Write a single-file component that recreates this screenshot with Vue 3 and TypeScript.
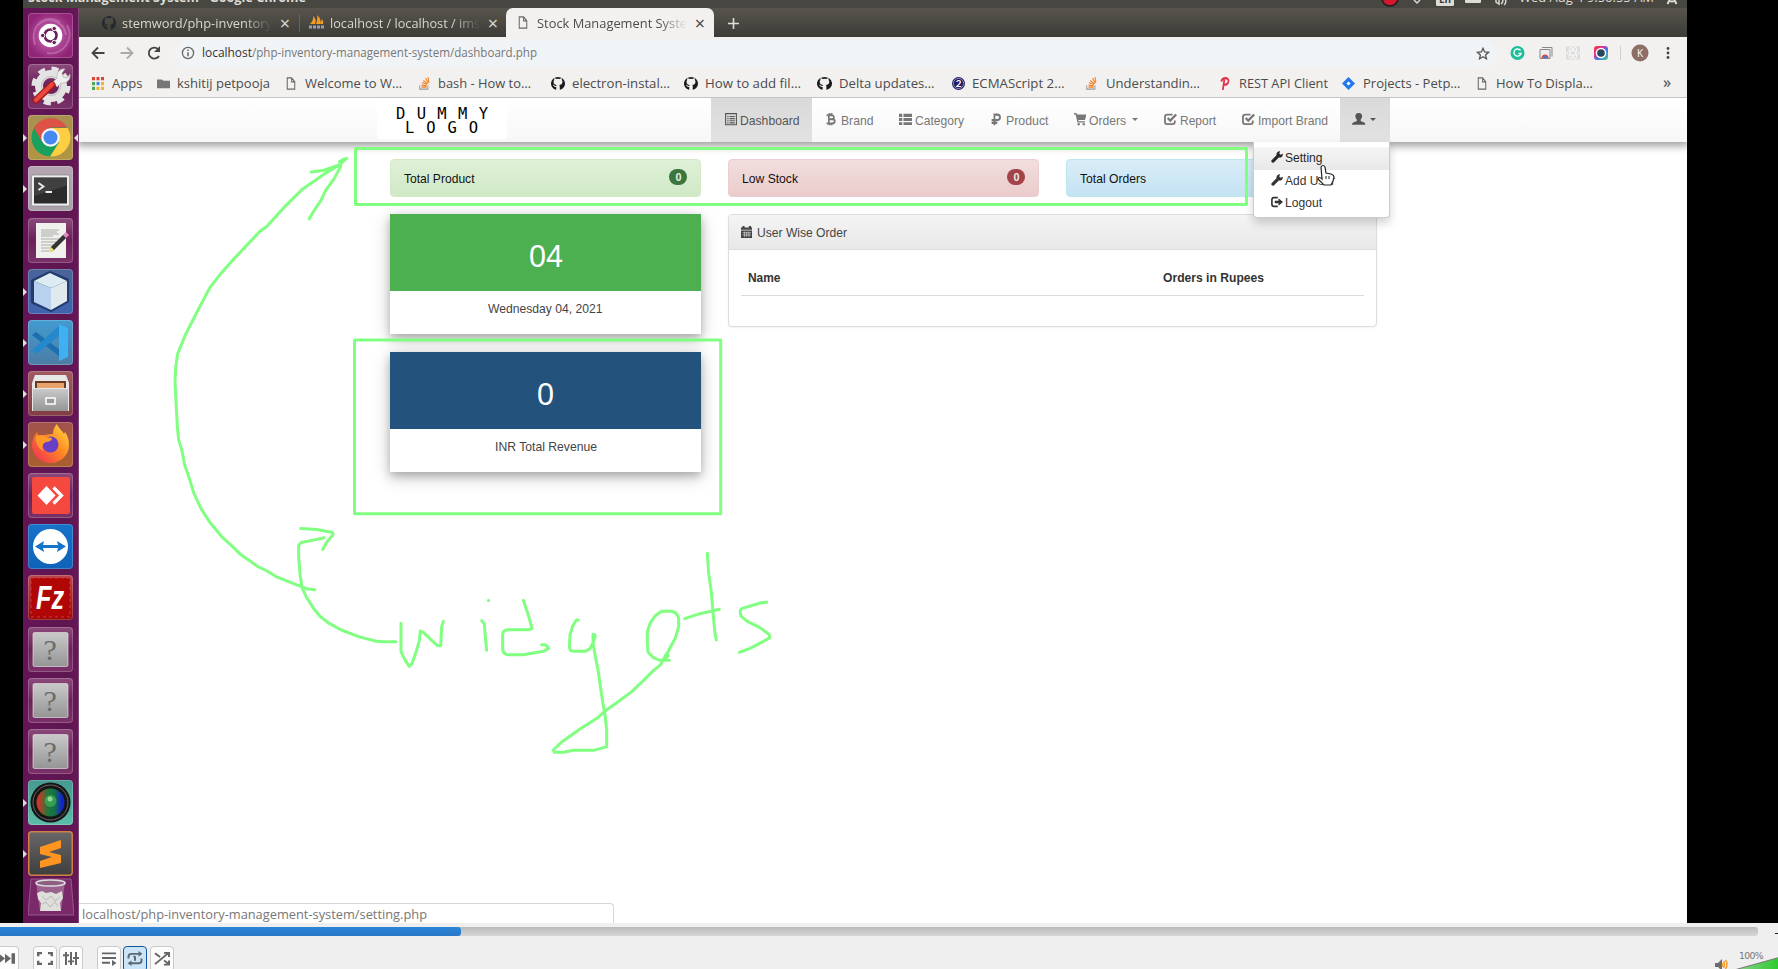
<script setup lang="ts">
import { h } from 'vue'

interface FitProps { t: string; w: number; s?: number; f?: string; b?: boolean; plain?: boolean }

// Single line of text stretched to a known width; its baseline sits 15px below the top.
const Fit = (p: FitProps) =>
  h('svg', { class: ['fit', p.f ?? 'ui'], width: p.w, height: 20 }, [
    h('text', {
      x: 0, y: 15, 'font-size': p.s ?? 12.6, 'font-weight': p.b ? 700 : 400,
      textLength: p.w, lengthAdjust: p.plain ? 'spacing' : 'spacingAndGlyphs', fill: 'currentColor',
    }, p.t),
  ])
Fit.props = { t: String, w: Number, s: Number, f: String, b: Boolean, plain: Boolean }

interface IconProps { n: string; w: number; h?: number }
const Icon = (p: IconProps) =>
  h('svg', { class: 'ic', width: p.w, height: p.h ?? p.w, viewBox: '0 0 16 16', preserveAspectRatio: 'none' }, [h('use', { href: '#i-' + p.n })])
Icon.props = { n: String, w: Number, h: Number }

const bookmarks = [
  { n: 'apps', iw: 12, slot: 20, w: 30.5, total: 65, t: 'Apps' },
  { n: 'folder', iw: 13, slot: 20, w: 93, total: 129, t: 'kshitij petpooja' },
  { n: 'file', iw: 10, slot: 19, w: 97, total: 133, t: 'Welcome to W…' },
  { n: 'so', iw: 11, slot: 19, w: 93, total: 132, t: 'bash - How to…' },
  { n: 'github', iw: 14, slot: 21, w: 98, total: 133, t: 'electron-instal…' },
  { n: 'github', iw: 14, slot: 21, w: 96, total: 133, t: 'How to add fil…' },
  { n: 'github', iw: 15, slot: 22, w: 95.5, total: 135, t: 'Delta updates…' },
  { n: 'ecma', iw: 13, slot: 20, w: 92.5, total: 134, t: 'ECMAScript 2…' },
  { n: 'so', iw: 11, slot: 20, w: 94, total: 134, t: 'Understandin…' },
  { n: 'p', iw: 10, slot: 19, w: 89, total: 122, t: 'REST API Client' },
  { n: 'jira', iw: 13, slot: 21, w: 97.5, total: 135, t: 'Projects - Petp…' },
  { n: 'file', iw: 10, slot: 19, w: 97, total: 116, t: 'How To Displa…' },
]

const nav = [
  { n: 'dash', iw: 12, slot: 14.5, w: 59.5, total: 100.5, t: 'Dashboard', active: true },
  { n: 'btc', iw: 10, slot: 15, w: 32.5, total: 73, t: 'Brand' },
  { n: 'list', iw: 13, slot: 16.5, w: 49, total: 92.5, t: 'Category' },
  { n: 'rub', iw: 10, slot: 14.5, w: 42.5, total: 82.5, t: 'Product' },
  { n: 'cart', iw: 12.5, slot: 15.5, w: 37, total: 90, t: 'Orders', caret: true },
  { n: 'check', iw: 13, slot: 16.5, w: 36, total: 78, t: 'Report' },
  { n: 'check', iw: 13, slot: 16.5, w: 70, total: 112.5, t: 'Import Brand' },
]

const launcher = [
  { n: 'ubuntu', bg: 'violet' }, { n: 'settings', bg: 'glass' },
  { n: 'chrome', bg: 'gold', run: true, focus: true }, { n: 'term', bg: 'silver', run: true },
  { n: 'edit', bg: 'glass' }, { n: 'cube', bg: 'royal', run: true },
  { n: 'code', bg: 'azure', run: true }, { n: 'files', bg: 'brown', run: true },
  { n: 'fox', bg: 'rust', run: true }, { n: 'anydesk', bg: 'glass' },
  { n: 'tv', bg: 'blue' }, { n: 'fz', bg: 'red' },
  { n: 'unknown', bg: 'glass' }, { n: 'unknown', bg: 'glass' }, { n: 'unknown', bg: 'glass' },
  { n: 'lens', bg: 'teal', run: true }, { n: 'sublime', bg: 'dark', run: true },
]

const stats = [
  { t: 'Total Product', w: 70.5, c: 'success' },
  { t: 'Low Stock', w: 56, c: 'danger' },
  { t: 'Total Orders', w: 66, c: 'info' },
]
const cards = [
  { v: '04', vw: 34, t: 'Wednesday 04, 2021', w: 114.5, c: 'green' },
  { v: '0', vw: 17, t: 'INR Total Revenue', w: 102, c: 'navy' },
]
const menu = [
  { n: 'wrench', t: 'Setting', w: 37.5, hover: true },
  { n: 'wrench', t: 'Add User', w: 50 },
  { n: 'logout', t: 'Logout', w: 37 },
]
const controls = ['next', 'full', 'ext', 'playlist', 'loop', 'random']
</script>

<template>
  <div class="shot">
    <svg class="defs" width="0" height="0">
      <defs>
        <linearGradient id="g-fox" x1="1" y1="0" x2="0" y2="1"><stop offset="0" stop-color="#ffe04a" /><stop offset=".45" stop-color="#ff8a20" /><stop offset="1" stop-color="#f0245c" /></linearGradient>
        <linearGradient id="g-grey" x1="0" y1="0" x2="0" y2="1"><stop offset="0" stop-color="#c9c9c9" /><stop offset="1" stop-color="#959595" /></linearGradient>
        <linearGradient id="g-lens"><stop offset=".1" stop-color="#c33a28" /><stop offset=".4" stop-color="#1c7a3a" /><stop offset=".65" stop-color="#157049" /><stop offset=".9" stop-color="#1226c8" /></linearGradient>
        <linearGradient id="g-rgb" x1="0" y1="0" x2="1" y2="1"><stop offset="0" stop-color="#f33" /><stop offset=".35" stop-color="#e0309a" /><stop offset=".6" stop-color="#3a7cf0" /><stop offset="1" stop-color="#4ad07a" /></linearGradient>
        <linearGradient id="g-vol"><stop offset="0" stop-color="#8fd08f" /><stop offset="1" stop-color="#2ccb2c" /></linearGradient>
      </defs>
      <symbol id="i-github" viewBox="0 0 16 16"><path fill="currentColor" d="M8 0a8 8 0 0 0-2.5 15.6c.4.1.5-.2.5-.4v-3c-2.2.5-2.7-1-2.7-1-.4-.9-.9-1.2-.9-1.2-.7-.5.1-.5.1-.5.8.1 1.2.8 1.2.8.7 1.2 1.9.9 2.3.7.1-.5.3-.9.5-1.1-1.8-.2-3.6-.9-3.6-4 0-.9.3-1.6.8-2.1-.1-.2-.4-1 .1-2.1 0 0 .7-.2 2.2.8a7.6 7.6 0 0 1 4 0c1.5-1 2.2-.8 2.2-.8.4 1.1.2 1.9.1 2.1.5.6.8 1.3.8 2.1 0 3.1-1.9 3.8-3.7 4 .3.3.6.8.6 1.5v3.800c0 .2.1.5.5.4A8 8 0 0 0 8 0z" /></symbol>
      <symbol id="i-file" viewBox="0 0 16 16"><path fill="none" stroke="#666" stroke-width="1.6" d="M2 1h7l5 5v9H2zM9 1v5h5" /></symbol>
      <symbol id="i-folder" viewBox="0 0 16 16"><path fill="#777" d="M0 2h6l2 2h8v11H0z" /></symbol>
      <symbol id="i-apps" viewBox="0 0 16 16"><path fill="#dc4437" d="M0 0h4v4H0zM6 0h4v4H6zM12 0h4v4h-4z" /><path fill="#4caa57" d="M0 6h4v4H0zM0 12h4v4H0z" /><path fill="#3f83ee" d="M6 6h4v4H6z" /><path fill="#f2b526" d="M12 6h4v4h-4zM6 12h4v4H6zM12 12h4v4h-4z" /></symbol>
      <symbol id="i-so" viewBox="0 0 16 16"><path fill="none" stroke="#999" stroke-width="1.4" d="M1 10v5h12v-5" /><path fill="none" stroke="#f48024" stroke-width="1.5" d="M3.5 12.500h7.5M3.6 10l7.5.8M4.5 7l7.2 2.2M6.3 4.2l6.2 4M9.5 1.500l4.2 6M13 0l1.500 6.5" /></symbol>
      <symbol id="i-ecma" viewBox="0 0 16 16"><circle cx="8" cy="8" r="8" fill="#211c63" /><circle cx="8" cy="8" r="6.3" fill="none" stroke="#fff" stroke-width=".6" /><text x="4.5" y="12.5" font-size="12" font-weight="700" fill="#fff" font-family="Lato,sans-serif">2</text></symbol>
      <symbol id="i-p" viewBox="0 0 16 16"><path fill="none" stroke="#e8304c" stroke-width="2.8" d="M4.5 16L7 3M2 5.500C4 .5 14 0 13.500 5S8 9.500 6 9" /></symbol>
      <symbol id="i-jira" viewBox="0 0 16 16"><path fill="#2278ec" d="M8 0l8 8-8 8-8-8z" /><path fill="#fff" d="M8 5.400L10.600 8 8 10.600 5.400 8z" /></symbol>
      <symbol id="i-dash" viewBox="0 0 16 16"><path fill="none" stroke="currentColor" stroke-width="1.5" d="M.8.8h14.4v14.4H.8z" /><path stroke="currentColor" stroke-width="1.5" d="M3 4.500h1.800M6 4.500h7M3 7.200h1.800M6 7.200h7M3 9.900h1.800M6 9.900h7M3 12.600h1.800M6 12.600h7" /></symbol>
      <symbol id="i-btc" viewBox="0 0 16 16"><path fill="none" stroke="currentColor" stroke-width="2.6" d="M1 3h8c5 0 5 5 0 5H5h5c5.500 0 5.500 5.400 0 5.400H1M4.500 3v10M5.500 0v3M9 0v3M5.500 13v3M9 13v3" /></symbol>
      <symbol id="i-list" viewBox="0 0 16 16"><path fill="currentColor" d="M0 1h4v4H0zM5.500 1H16v4H5.500zM0 6.500h4v3.800H0zM5.500 6.500H16v3.800H5.500zM0 11.800h4v3.600H0zM5.500 11.800H16v3.600H5.500z" /></symbol>
      <symbol id="i-rub" viewBox="0 0 16 16"><path fill="none" stroke="currentColor" stroke-width="2.8" d="M5.500 16V2H10c6 0 6 7 0 7H1M1 12.600h9" /></symbol>
      <symbol id="i-cart" viewBox="0 0 16 16"><path fill="currentColor" d="M0 0h3l1 2h12l-2 7H5.500l.5 1.500h8V12H4.500L2 2H0zM4.500 13h3v3h-3zM11 13h3v3h-3z" /></symbol>
      <symbol id="i-check" viewBox="0 0 16 16"><path fill="none" stroke="currentColor" stroke-width="2.2" d="M10.500 2.200H4C2 2.200 1.200 3 1.200 5v6.500c0 2 .8 2.800 2.800 2.800h6.500c2 0 2.800-.8 2.800-2.800V9.500" /><path fill="none" stroke="currentColor" stroke-width="2.8" d="M4.500 6.500l3.200 3.200L15 2" /></symbol>
      <symbol id="i-user" viewBox="0 0 16 16"><path fill="currentColor" d="M8 0c3 0 4.200 2 4 4.500-.1 2-1 3-1.700 4 0 1.500 0 2 1 2.300 3.200 1 4.700 1.800 4.700 4.200H0c0-2.400 1.500-3.200 4.700-4.200 1-.3 1-.8 1-2.300-.7-1-1.600-2-1.700-4C3.800 2 5 0 8 0z" /></symbol>
      <symbol id="i-wrench" viewBox="0 0 16 16"><path fill="currentColor" d="M15.700 3.600L12.800 5 11 3.200l1.200-3C9 0 7 2 7.300 5.600L.8 12.200c-1.500 1.800 1.200 4.400 3 3l6.600-6.500c3.400.5 5.600-1.700 5.300-5.100z" /></symbol>
      <symbol id="i-logout" viewBox="0 0 16 16"><path fill="none" stroke="currentColor" stroke-width="2.2" d="M9 2.200H4C2 2.200 1.200 3 1.200 5v6c0 2 .8 2.800 2.800 2.800h5" /><path fill="currentColor" d="M5 6.200h5V3l6 5-6 5V9.800H5z" /></symbol>
      <symbol id="i-calendar" viewBox="0 0 16 16"><path fill="currentColor" d="M0 2h2V0h3v2h6V0h3v2h2v3H0zM0 6h16v10H0z" /><path stroke="#eee" stroke-width=".8" d="M2 9h12M2 12h12M5 7.500v7M8 7.500v7M11 7.500v7" /></symbol>

      <symbol id="i-ubuntu" viewBox="0 0 45 45"><path fill="none" stroke="#d9a0cf" stroke-width="2" opacity=".4" d="M7 32C1 12 18 0 32 9M39 12c8 14-4 31-20 28M10 12C20 2 36 8 38 22" /><circle cx="22.5" cy="22.5" r="11.8" fill="#fff" /><circle cx="22.5" cy="22.5" r="6" fill="none" stroke="#6d1f5d" stroke-width="2.6" /><g fill="#6d1f5d" stroke="#fff"><circle cx="14.7" cy="22.5" r="2.2" /><circle cx="26.2" cy="15.5" r="2.2" /><circle cx="26.2" cy="29.5" r="2.2" /></g></symbol>
      <symbol id="i-settings" viewBox="0 0 45 45"><circle cx="23" cy="22" r="17" fill="none" stroke="#e3e3e3" stroke-width="5" stroke-dasharray="7 6.35" /><circle cx="23" cy="22" r="12" fill="none" stroke="#e3e3e3" stroke-width="8" /><circle cx="23" cy="22" r="9.5" fill="none" stroke="#bdbdbd" stroke-width="1" /><path fill="#eee" stroke="#aaa" stroke-width=".6" d="M25 18l4-4c-1-5 3-10 8-9l-3 4 1 4 4 1 3-4c1 6-4 10-9 9l-4 4z" /><path stroke="#a61818" stroke-width="7" stroke-linecap="round" d="M8 36L24 21" /><path stroke="#e8483c" stroke-width="4.5" stroke-linecap="round" d="M8 36L24 20.5" /></symbol>
      <symbol id="i-chrome" viewBox="0 0 45 45"><circle cx="22.5" cy="22.5" r="19" fill="#18a05e" /><path fill="#de5246" d="M22.500 22.500L14 27 6 13a19 19 0 0 1 33-.5H22.500z" /><path fill="#ffcd42" d="M22.500 13h17.200A19 19 0 0 1 22 41.500l9-14z" /><circle cx="22.5" cy="22.5" r="9.3" fill="#f4f4f4" /><circle cx="22.5" cy="22.5" r="7" fill="#4687f0" /></symbol>
      <symbol id="i-term" viewBox="0 0 45 45"><rect x="3.5" y="9" width="38" height="31" rx="1.5" fill="#eee" stroke="#888" stroke-width=".7" /><rect x="6" y="11.5" width="33" height="26" fill="#2b2b2b" /><path fill="#555" opacity=".5" d="M6 11.500h33v8L6 30z" /><path fill="none" stroke="#eee" stroke-width="1.8" d="M10.500 17l5 3.500-5 3.500M17.500 26H24" /></symbol>
      <symbol id="i-edit" viewBox="0 0 45 45"><path fill="#f0f0ec" d="M8 5h30v35H8z" /><path stroke="#999" stroke-width=".8" d="M13 12h18M13 14h16M13 16h18M13 18h12M13 21h18M13 24h15M13 27h17M13 30h10M13 33h12" /><path stroke="#333" stroke-width="4.5" d="M24 31l13-13" /><path stroke="#d98fc0" stroke-width="4.5" d="M36.500 18.500l3-3" /><path fill="#e9dd7a" d="M21 34l1.500-5.500 4 4z" /></symbol>
      <symbol id="i-cube" viewBox="0 0 45 45"><path fill="#1b315e" stroke="#1b315e" stroke-width="4" stroke-linejoin="round" opacity=".8" d="M22 4l17 7v21L23 41 5 33V12z" /><path fill="#dcecf2" d="M22 4l17 8-16 7L6 12z" /><path fill="#b7d1ee" d="M6 12l17 7v22L6 33z" /><path fill="#dfe9ee" d="M39 12l-16 7v22l16-9z" /></symbol>
      <symbol id="i-code" viewBox="0 0 45 45"><path fill="#1c6fae" d="M4 15l4-3 24 18v7z" /><path fill="#2488cd" d="M4 30l4 4 24-19V5z" /><path fill="#3eb0f3" d="M31 4l9 4v29l-9 4z" /></symbol>
      <symbol id="i-files" viewBox="0 0 45 45"><path fill="#e7e7e7" d="M7 4h31l3 8v28H4V12z" /><path fill="#6b3a24" d="M7 10h31v7H7z" /><path fill="#e8a36c" d="M9 12h27v5H9z" /><path fill="url(#g-grey)" d="M5 18h35v22H5z" /><rect x="18" y="27" width="9" height="6" fill="#999" stroke="#fff" stroke-width="1.5" /></symbol>
      <symbol id="i-fox" viewBox="0 0 45 45"><path fill="url(#g-fox)" d="M25 12c0-5 2-8 4-10 2 5 5 6 7 10l1-2c3 4 4 9 4 13 0 10-8 18-18.500 18S4 33 4 23c0-5 2-9 5-13l1 3c4 0 8 0 15-1z" /><circle cx="22.5" cy="22.5" r="8" fill="#6740c7" /><path fill="#ff9a2a" d="M8 14c5-2 8 0 10 1l6 1c0 3-4 4-6 4-4 2-5 5-2 9-6-2-9-9-8-15z" /></symbol>
      <symbol id="i-anydesk" viewBox="0 0 45 45"><rect x="4" y="4" width="38" height="37" rx="2" fill="#f5483f" /><path fill="#fff" d="M18.500 13l9 9.500-9 9.500-9-9.500z" /><path fill="none" stroke="#fff" stroke-width="3.2" d="M25.500 14.500l8 8-8 8" /></symbol>
      <symbol id="i-tv" viewBox="0 0 45 45"><circle cx="22.5" cy="22.5" r="17.5" fill="#fff" /><path fill="#1573c8" d="M7 22.500l9-5.500-1 4h15l-1-4 9 5.500-9 5.500 1-4H15l1 4z" /></symbol>
      <symbol id="i-fz" viewBox="0 0 45 45"><rect x="3" y="3" width="39" height="39" fill="#b10606" stroke="#d33" stroke-dasharray="3 3" /><text x="8" y="34" font-size="34" font-weight="700" font-style="italic" font-family="Liberation Sans,Arial,sans-serif" fill="#fff" textLength="28" lengthAdjust="spacingAndGlyphs">Fz</text></symbol>
      <symbol id="i-unknown" viewBox="0 0 45 45"><rect x="5" y="5.5" width="35" height="34" rx="1.5" fill="url(#g-grey)" stroke="#ddd" stroke-width=".7" /><text x="15.5" y="33" font-size="30" font-family="Liberation Serif,serif" fill="#6c6c6c">?</text></symbol>
      <symbol id="i-lens" viewBox="0 0 45 45"><circle cx="22.5" cy="22.5" r="20" fill="#151515" /><circle cx="22.5" cy="22.5" r="17.5" fill="none" stroke="#666" /><circle cx="22.5" cy="22.5" r="14" fill="url(#g-lens)" /><circle cx="22.5" cy="21" r="6" fill="#4abb5a" opacity=".6" /><circle cx="22" cy="19" r="2.5" fill="#b8f0b0" opacity=".7" /></symbol>
      <symbol id="i-sublime" viewBox="0 0 45 45"><path fill="#ff9420" d="M12 16l21-7v8l-12 4 12 3v8l-21 5v-7l12-4-12-3z" /></symbol>

      <symbol id="i-next" viewBox="0 0 16 16"><path fill="#666" d="M0 3l6 5-6 5zM6 3l6 5-6 5zM12.500 2.500H16v11h-3.500z" /></symbol>
      <symbol id="i-full" viewBox="0 0 16 16"><path fill="none" stroke="#666" stroke-width="2.4" d="M1.200 5.500V2.200H5M11 2.200h3.800v3.300M14.800 10.500v3.300H11M5 13.800H1.200v-3.300" /></symbol>
      <symbol id="i-ext" viewBox="0 0 16 16"><path fill="none" stroke="#666" stroke-width="2" d="M3 1v14M8 1v14M13 1v14M0 4.500h6M5 11h6M10 7.500h6" /></symbol>
      <symbol id="i-playlist" viewBox="0 0 16 16"><path stroke="#666" stroke-width="2" d="M1 2.500h14M1 7.500h14M1 12.500h8" /><path fill="#666" d="M11 9.500l4.500 3.200L11 16z" /></symbol>
      <symbol id="i-loop" viewBox="0 0 16 16"><path fill="none" stroke="#5c6a76" stroke-width="2" d="M1.500 8V6c0-2 1-3 3-3H13M14.500 8v2c0 2-1 3-3 3H3M8 5.500v5M6.500 6.500L8 5.500" /><path fill="#5c6a76" d="M11.500 0l4 3-4 3zM4.500 10l-4 3 4 3z" /></symbol>
      <symbol id="i-random" viewBox="0 0 16 16"><path fill="none" stroke="#666" stroke-width="2" d="M1 2.500l5 4M1 14L14 2.500M10 10l4.500 3.500M10 2h5v4.500M10 14.500h5V10" /></symbol>
    </svg>

    <div class="desktop">
      <header class="menubar">
        <Fit class="title" t="Stock Management System - Google Chrome" :w="278" :s="12.6" f="ub" b />
        <svg class="tray" width="135" height="8"><circle cx="9" cy="-2" r="8" fill="#d4172d" stroke="#1c1c1c" stroke-width="1.5" /><path fill="none" stroke="#d9d7cf" stroke-width="1.5" d="M33 0l3 3 3-3M115 0v2l3 2V0M121-2q2 4-1 6M124-2q2 5-1 7" /><rect x="55" y="-6" width="18" height="12" rx="1.5" fill="#dfdcd5" /><text x="58" y="3" font-size="10" font-weight="700" font-family="Open Sans,sans-serif" fill="#3c3b37">En</text><rect x="84" y="-4" width="16" height="7" rx="1" fill="#dfdcd5" /></svg>
        <Fit class="clock" t="Wed Aug  4 9:56:55 AM" :w="135" :s="12.6" f="ub" />
        <svg class="gear" width="14" height="8"><circle cx="7" cy="-2" r="3.5" fill="none" stroke="#dfdcd5" stroke-width="2" /><path stroke="#dfdcd5" stroke-width="2" d="M4 1L2.500 4M10 1l1.500 3" /></svg>
      </header>
      <div class="body">
        <aside class="launcher">
          <div v-for="(l, i) in launcher" :key="i" class="tile" :class="l.bg">
            <svg width="45" height="45"><use :href="'#i-' + l.n" /></svg>
            <i v-if="l.run" class="run" />
            <i v-if="l.focus" class="focus" />
          </div>
          <svg class="trash" width="46" height="38"><path fill="#7a2a68" stroke="#98588a" d="M3 1h40l3 36H0z" /><path fill="#a87a9d" opacity=".7" d="M8 4h29l-4 29H12z" /><ellipse cx="22.5" cy="5" rx="14.5" ry="3" fill="#8e5f83" stroke="#ddd" stroke-width="1.5" /><path fill="#dededa" d="M9 15l5-2 4 2 5-1 5 2 6-3 1 7-3 5 1 8H12l1-8-3-4z" /><path fill="none" stroke="#b8b8b4" d="M14 18l4 4 5-4 4 5 5-4M14 26l4-2 4 5 5-5 3 4" /></svg>
        </aside>

        <main class="browser">
          <div class="tabs">
            <div class="tab t1"><Icon class="ink" n="github" :w="14" :h="14" /><span class="lbl"><Fit t="stemword/php-inventory" :w="150" f="ub" :s="12.5" /></span><b>×</b></div>
            <div class="tab t2"><svg class="ic" width="15" height="15"><path fill="#f39a20" d="M1 9Q5 5 4 1q4 3 2 8zM7 9q2-6 1-9 5 4 3 9zM11 9l2-5q2 3 1 5z" /><path stroke="#9a9db5" stroke-width="3" stroke-dasharray="3 1" d="M0 12h15" /></svg><span class="lbl"><Fit t="localhost / localhost / ims" :w="150" f="ub" :s="12.5" /></span><b>×</b></div>
            <div class="tab t3"><Icon n="file" :w="10" :h="13" /><span class="lbl"><Fit t="Stock Management Syste" :w="150" f="ub" :s="12.5" /></span><b>×</b></div>
            <svg class="plus" width="11" height="11"><path stroke="#deddd6" stroke-width="1.6" d="M5.500 0v11M0 5.500h11" /></svg>
          </div>
          <div class="toolbar">
            <svg class="arrows" width="84" height="20"><g fill="none" stroke-width="1.8"><path stroke="#444" d="M25.500 10H14M19 4.500L13.500 10l5.500 5.500" /><path stroke="#aaa" d="M41.500 10H53M48 4.500l5.500 5.500-5.500 5.500" /><path stroke="#444" d="M80 13A5.500 5.500 0 1 1 79 6" /></g><path fill="#444" d="M81 3v6h-6z" /></svg>
            <div class="omni">
              <svg width="14" height="14"><circle cx="7" cy="7" r="5.6" fill="none" stroke="#666" stroke-width="1.3" /><path stroke="#666" stroke-width="1.5" d="M7 6.300v4M7 3.500v1.500" /></svg>
              <Fit class="host" t="localhost" :w="50" f="ub" :s="12.5" /><Fit class="path" t="/php-inventory-management-system/dashboard.php" :w="285" f="ub" :s="12.5" />
              <svg class="star" width="14" height="13"><path fill="none" stroke="#555" stroke-width="1.3" d="M7 1.300l1.600 3.700 4 .3-3 2.600.9 3.900L7 9.700l-3.500 2.100.9-3.900-3-2.600 4-.3z" /></svg>
            </div>
            <svg class="exts" width="176" height="20"><circle cx="7.5" cy="10" r="7" fill="#1cbf98" /><path fill="none" stroke="#fff" stroke-width="1.4" d="M10.500 7.500A3.600 3.600 0 1 0 11 10.500H8.500" /><path fill="#eee" stroke="#888" d="M32 4.500h10v9M30 6.500h10v9H30z" /><path fill="#d94b3c" d="M31.500 15a3.500 3.500 0 0 1 7 0z" /><circle cx="35.5" cy="14" r="1.5" fill="#3b78e7" /><rect x="56" y="3.5" width="14" height="13" fill="#dcdcdc" /><g fill="none" stroke="#f7f7f7"><ellipse cx="63" cy="10" rx="6" ry="2.3" /><ellipse cx="63" cy="10" rx="6" ry="2.3" transform="rotate(60 63 10)" /><ellipse cx="63" cy="10" rx="6" ry="2.3" transform="rotate(120 63 10)" /></g><rect x="84" y="3" width="14" height="14" rx="3" fill="url(#g-rgb)" /><circle cx="91" cy="10" r="5.3" fill="#fff" /><circle cx="91" cy="10" r="3.8" fill="#27455b" /><path stroke="#d0d0d0" d="M110.500 3v14" /><circle cx="130" cy="10" r="8.5" fill="#8d6e66" /><text x="127" y="13.5" font-size="10" font-family="Open Sans,sans-serif" fill="#fff">K</text><g fill="#444"><circle cx="158" cy="5.5" r="1.4" /><circle cx="158" cy="10" r="1.4" /><circle cx="158" cy="14.5" r="1.4" /></g></svg>
          </div>
          <div class="bookmarks">
            <div v-for="(b, i) in bookmarks" :key="i" class="bm" :style="{ width: b.total + 'px' }">
              <span class="slot" :style="{ width: b.slot + 'px' }"><Icon :n="b.n" :w="b.iw" :h="b.n === 'folder' ? 11 : 13" /></span>
              <Fit :t="b.t" :w="b.w" f="ub" :s="12.4" />
            </div>
            <span class="more">»</span>
          </div>

          <div class="page">
            <nav class="navbar">
              <div class="logo"><Fit t="DUMMY" :w="92" :s="15.5" f="pix" plain /><Fit t="LOGO" :w="73" :s="15.5" f="pix" plain /></div>
              <div v-for="n in nav" :key="n.t" class="item" :class="{ active: n.active }" :style="{ width: n.total + 'px' }">
                <span class="slot" :style="{ width: n.slot + 'px' }"><Icon :n="n.n" :w="n.iw" :h="12.5" /></span>
                <Fit :t="n.t" :w="n.w" /><i v-if="n.caret" class="caret" />
              </div>
              <div class="item active user">
                <Icon n="user" :w="13.5" :h="12.5" /><i class="caret" />
                <div class="menu">
                  <div v-for="m in menu" :key="m.t" class="row" :class="{ hover: m.hover }"><span class="slot"><Icon :n="m.n" :w="12" :h="12" /></span><Fit :t="m.t" :w="m.w" /></div>
                </div>
              </div>
            </nav>

            <div class="content">
              <section class="stats">
                <div v-for="s in stats" :key="s.t" class="stat" :class="s.c"><Fit :t="s.t" :w="s.w" /><span class="badge">0</span></div>
              </section>
              <section class="cols">
                <div class="left">
                  <article v-for="c in cards" :key="c.t" class="card">
                    <div class="head" :class="c.c"><Fit :t="c.v" :w="c.vw" :s="31.5" /></div>
                    <div class="foot"><Fit :t="c.t" :w="c.w" /></div>
                  </article>
                </div>
                <div class="panel">
                  <div class="phead"><Icon n="calendar" :w="11.5" :h="12" /><Fit t="User Wise Order" :w="90" /></div>
                  <div class="thead"><Fit t="Name" :w="32.5" b /><Fit t="Orders in Rupees" :w="101" b /></div>
                </div>
              </section>
            </div>
            <div class="status"><Fit t="localhost/php-inventory-management-system/setting.php" :w="345" f="ub" :s="12.5" /></div>
          </div>
        </main>
      </div>
    </div>

    <footer class="player">
      <div class="track"><div class="fill" /></div>
      <div class="controls">
        <span v-for="c in controls" :key="c" class="btn" :class="'b-' + c"><Icon :n="c" :w="16" :h="15" /></span>
        <svg class="volume" width="66" height="23"><path fill="#6c6c6c" d="M3 17h3l4-4v12l-4-4H3z" /><path fill="none" stroke="#f79a2c" stroke-width="1.4" d="M11.500 15q2 3 0 7M13.500 14q3 4 0 9M10.500 17v4" /><text x="27" y="13" font-size="9.3" textLength="24.5" font-family="DejaVu Sans,sans-serif" fill="#777">100%</text><path fill="url(#g-vol)" stroke="#777" d="M24 23.500L67 11.500v12z" /></svg>
      </div>
    </footer>

    <svg class="ink-layer" width="1778" height="969">
      <g fill="none" stroke="#80ff80" stroke-width="3" stroke-linecap="round" stroke-linejoin="round">
        <path d="M355.500 148.500H1246.500V204.500H355.500zM354.500 340H720.700V513.700H354.500z" />
        <g transform="translate(150 130) scale(.33333 .34435)">
          <path vector-effect="non-scaling-stroke" d="M494 1335L470 1332 440 1321 380 1298 350 1280 324 1268 272 1233 248 1210 218 1184 180 1140 154 1101 132 1056 118 1012 104 972 96 932 86 900 82 860 77 770 75 730 77 690 83 650 106 595 148 515 180 457 214 415 250 376 330 294 350 280 400 227 456 173 520 130 570 100 590 82M484 122L522 117 572 100M568 92L582 84M572 106L552 142 528 174 512 206 496 228 478 258" />
          <path vector-effect="non-scaling-stroke" d="M738 1486H700L676 1484 628 1472 574 1452 536 1432 510 1412 490 1388 470 1358 456 1328 450 1290 446 1240V1206L454 1198 490 1191 522 1184M452 1157L500 1160 548 1169 549 1175 530 1197 518 1218" />
        </g>
        <g transform="translate(360 530) scale(.33333)">
          <path vector-effect="non-scaling-stroke" d="M123 280V365L136 392 148 409 156 401 170 360 178 332 181 303 190 307 232 347 242 347 245 290 250 274M365 272L373 282 376 320 380 361M385 211.500h1M490 211L500 240 508 266 516 295 508 299H444Q430 300 428 312V360Q430 372 444 374H490L550 364 566 355 558 345 545 344M655 270H649L638 288 630 315 628 350Q630 364 640 364H676L690 356 698 340 705 322 705 315 699 313 699 340 708 390 715 425 720 462 728 515 735 555 740 600V650L720 656 700 661H640L610 667H583L580 660 605 636 660 597 712 564 734 544 770 518 815 485 850 452 880 422 902 404 920 370 924 378 912 386M974 266L1020 251 1078 238M1042 70L1046 130 1054 185 1060 260 1065 310 1069 330M1220 217L1200 219 1145 236Q1137 244 1144 259L1162 274 1200 293 1228 314 1229 323 1216 331 1170 355 1138 367M928 391H900L880 383 864 366 862 340V305L870 280 885 258 904 244H935Q952 248 956 265V290L946 324 930 354 922 370" />
        </g>
      </g>
      <path fill="#fff" stroke="#222" stroke-width="1.2" d="M1321 167q2-3 4 0l1 6 5 1q3 1 3 3l-1 4-2 4h-7l-6-6q1-3 4 0z" />
      <path stroke="#222" d="M1326 176v3M1329 176v3M1775 933.500h3" />
    </svg>
  </div>
</template>

<style scoped>
.shot { position: relative; width: 1778px; height: 969px; overflow: hidden; background: #000; }
.defs { position: absolute; }
.desktop { margin-left: 23px; width: 1664px; height: 923px; display: flex; flex-direction: column; background: #fff; overflow: hidden; }
.menubar { height: 8px; background: #474640; color: #dfdcd5; display: flex; align-items: flex-start; overflow: hidden; flex: none; }
.title { margin: -13px 0 0 5px; }
.tray { margin-left: 1075px; flex: none; }
.clock { margin: -13px 0 0 3px; }
.gear { margin-left: 11px; flex: none; }
.body { display: flex; flex: 1; min-height: 0; }
.launcher { width: 56px; flex: none; background: linear-gradient(90deg, #651457, #5d1750 80%, #681659); display: flex; flex-direction: column; align-items: center; gap: 6.13px; padding-top: 5px; box-sizing: border-box; border-right: 1px solid #7c4772; }
.tile { position: relative; width: 45px; height: 45px; flex: none; border-radius: 4px; box-shadow: inset 0 0 0 1px rgba(255, 255, 255, .2); }
.tile svg { display: block; }
.violet { background: radial-gradient(circle, #d272bd, #912477 75%); }
.glass { background: linear-gradient(#8c4a7b, #6b2059 50%, #7a3269); }
.gold { background: linear-gradient(#a89052, #b29543); }
.silver { background: linear-gradient(#b5a5b2, #aaa0a9); }
.royal { background: linear-gradient(#4a6499, #3f63ae); }
.azure { background: linear-gradient(#429bd0, #4d7ca5); }
.brown { background: linear-gradient(#a05b62, #823c43); }
.rust { background: linear-gradient(#a2524d, #a8602f); }
.blue { background: linear-gradient(#1772ca, #0f62b8); }
.red { background: linear-gradient(#b64850, #970808); }
.teal { background: linear-gradient(#46998f, #5cbca9); }
.dark { background: linear-gradient(#696767, #3e3e3e); box-shadow: inset 0 0 0 1.5px #d08243; }
.run, .focus { position: absolute; top: 19px; border: solid transparent; border-width: 4px 0 4px 4px; border-left-color: #ddd; left: -5px; }
.focus { left: 46px; border-width: 4px 4px 4px 0; border-right-color: #ddd; }
.trash { flex: none; margin-top: -4px; }
.browser { flex: 1; min-width: 0; display: flex; flex-direction: column; }
.tabs { height: 29px; flex: none; background: linear-gradient(#57554c, #3c3b37); display: flex; align-items: center; }
.tab { display: flex; align-items: center; height: 29px; color: #d8d6ce; box-sizing: border-box; }
.tab b { font: 400 18px/20px "Noto Sans", sans-serif; width: 12px; text-align: center; margin-left: 7px; }
.lbl { height: 20px; width: 150px; -webkit-mask-image: linear-gradient(90deg, #000 82%, transparent 100%); mask-image: linear-gradient(90deg, #000 82%, transparent 100%); }
.t1 { width: 221px; padding-left: 23px; border-right: 1px solid #66645c; height: 18px; }
.t1 .ic { margin-right: 6px; }
.ink { color: #24292e; }
.t2 { width: 206px; padding-left: 9px; }
.t2 .ic { margin-right: 6px; }
.t3 { width: 208px; padding-left: 12px; background: #f2f1f0; color: #4c4c4c; border-radius: 7px 7px 0 0; }
.t3 .ic { margin-right: 9px; }
.plus { margin-left: 14px; margin-top: 1px; }
.toolbar { height: 32px; flex: none; background: #f2f1f0; display: flex; align-items: center; }
.arrows { flex: none; }
.omni { margin-left: 12px; width: 1322px; height: 27px; box-sizing: border-box; padding: 0 7px 0 6px; border-radius: 14px; background: #f1f4f6; display: flex; align-items: center; }
.omni .host { margin-left: 7px; color: #333; }
.path { color: #777; }
.host, .path { margin-top: -2px; }
.star { margin-left: auto; }
.exts { margin-left: 13px; flex: none; }
.bookmarks { height: 28px; flex: none; padding: 0 0 0 13px; background: #f2f1f0; border-bottom: 1px solid #c4c3c2; display: flex; align-items: center; color: #4b4b4b; }
.bm { display: flex; align-items: center; flex: none; height: 25px; }
.bm .slot { color: #1b1b1b; }
.slot { display: flex; align-items: center; flex: none; }
.more { margin-left: 70px; font: 16px/20px "Noto Sans", sans-serif; margin-top: -3px; }
.page { flex: 1; min-height: 0; display: flex; flex-direction: column; background: #fff; }
.navbar { position: relative; z-index: 2; height: 44px; flex: none; background: linear-gradient(#fff, #f7f7f7); box-shadow: 0 2px 8px 2px rgba(0, 0, 0, .38); display: flex; color: #777; clip-path: inset(0 0 -150px 0); }
.logo { margin: 2px 204px 0 297.5px; width: 130.5px; height: 39px; background: #fff; flex: none; display: flex; flex-direction: column; align-items: center; color: #000; padding-top: 4px; box-sizing: border-box; }
.logo .fit { height: 14px; flex: none; }
.item { display: flex; align-items: center; flex: none; padding: 0 0 1px 14px; box-sizing: border-box; }
.active { background: linear-gradient(#d9d9d9, #e2e2e2); color: #555; }
.caret { border: solid transparent; border-width: 3.5px 3.5px 0; border-top-color: currentColor; margin-left: 5.5px; }
.user { position: relative; width: 50px; padding-left: 12px; }
.user > .caret { margin-left: 4px; }
.menu { position: absolute; right: 0; top: 44px; width: 137.5px; height: 76px; box-sizing: border-box; padding-top: 5px; background: #fff; border: 1px solid #ccc; border-top: 0; border-radius: 0 0 4px 4px; box-shadow: 0 5px 10px rgba(0, 0, 0, .18); color: #333; }
.row { height: 22.5px; display: flex; align-items: center; padding: 0 0 2px 17px; box-sizing: border-box; }
.row .slot { width: 14.5px; }
.hover { background: linear-gradient(#f5f5f5, #e8e8e8); color: #262626; }
.content { padding: 17.3px 0 0 310.7px; width: 988px; }
.stats { display: flex; gap: 26.2px; color: #111; }
.stat { width: 311.8px; height: 37.4px; box-sizing: border-box; border: 1px solid; border-radius: 4px; padding: 0 13px; display: flex; align-items: center; justify-content: space-between; flex: none; }
.success { background: linear-gradient(#dff0d8, #d0e9c6); border-color: #d6e9c6; }
.danger { background: linear-gradient(#f2dede, #ebcccc); border-color: #ebccd1; }
.info { background: linear-gradient(#d9edf7, #c4e3f3); border-color: #bce8f1; }
.badge { width: 18px; height: 16px; border-radius: 9px; background: #3c763d; color: #e8f1e4; font: 700 10.8px/16px "Liberation Sans", Arial, sans-serif; text-align: center; margin-top: -2px; }
.danger .badge { background: #a4434a; }
.cols { display: flex; align-items: flex-start; gap: 26.5px; margin-top: 17.3px; }
.card { width: 311.8px; height: 120.5px; margin-bottom: 17.5px; background: #fff; box-shadow: 0 4px 8px rgba(0, 0, 0, .22), 0 5px 18px rgba(0, 0, 0, .2); color: #444; }
.head { height: 77px; display: flex; justify-content: center; box-sizing: border-box; padding-top: 38.5px; color: #fff; }
.green { background: #4caf50; }
.navy { background: #23527c; }
.foot { display: flex; justify-content: center; padding-top: 7.5px; }
.panel { width: 649.5px; height: 113.5px; box-sizing: border-box; border: 1px solid #ddd; border-radius: 4px; background: #fff; box-shadow: 0 1px 2px rgba(0, 0, 0, .05); color: #444; }
.phead { height: 35.5px; box-sizing: border-box; padding: 0 0 0 12px; display: flex; align-items: center; gap: 4.5px; background: linear-gradient(#f4f4f5, #e8e8e8); border-bottom: 1px solid #ddd; border-radius: 3px 3px 0 0; }
.thead { margin: 17px 12.5px 0; height: 27.5px; border-bottom: 1.5px solid #ddd; padding-left: 6.5px; display: grid; grid-template-columns: 415px 1fr; color: #333; }
.status { margin-top: auto; width: 534.5px; height: 20px; box-sizing: border-box; border: solid #d6d6d6; border-width: 1px 1px 0 0; border-radius: 0 4px 0 0; padding-left: 3px; color: #777; background: #fff; }
.player { height: 46px; background: #efefef; display: flow-root; }
.track { margin-top: 4px; width: 1758px; height: 9px; border-radius: 0 3px 3px 0; background: linear-gradient(#bababa, #d7d7d7); }
.fill { width: 461px; height: 9px; border-radius: 0 3px 3px 0; background: linear-gradient(#2a85d8, #2878c8); }
.controls { display: flex; margin-top: 10px; }
.btn { width: 24px; height: 26px; box-sizing: border-box; border: 1px solid #c9c9c9; border-radius: 4px; background: #fcfcfc; display: flex; justify-content: center; padding-top: 4px; margin-right: 2.2px; flex: none; }
.b-next { margin-left: -5px; margin-right: 14px; }
.b-ext { margin-right: 14px; }
.b-loop { background: #cce4f7; border: 1.5px solid #14569a; }
.volume { margin-left: auto; }
.ink-layer { position: absolute; inset: 0; z-index: 5; }
</style>

<style>
.fit { display: block; flex: none; overflow: visible; white-space: pre; }
.fit.ui { font-family: "Liberation Sans", Arial, sans-serif; }
.fit.ub { font-family: "Open Sans", "Noto Sans", sans-serif; }
.fit.pix { font-family: "DejaVu Sans Mono", monospace; font-weight: 700; }
.ic { display: block; flex: none; }
</style>
